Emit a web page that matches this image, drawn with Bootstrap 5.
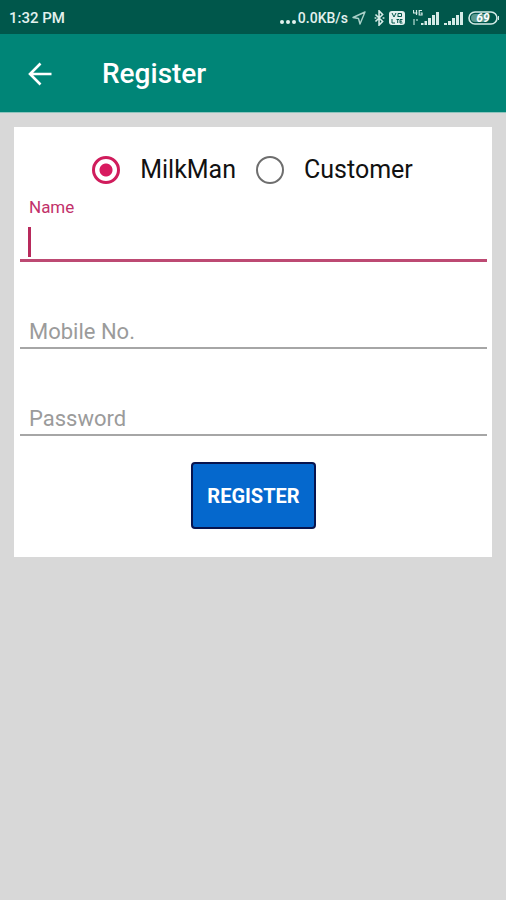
<!DOCTYPE html>
<html lang="en">
<head>
<meta charset="utf-8">
<meta name="viewport" content="width=device-width, initial-scale=1">
<title>Register</title>
<link href="https://cdn.jsdelivr.net/npm/bootstrap@5.3.0/dist/css/bootstrap.min.css" rel="stylesheet">
<style>
  body { font-family: Roboto, "Liberation Sans", sans-serif; background: #d8d8d8; color: #111; }
  .status-bar { background: #00574b; color: #e3f1ee; height: 34px; padding: 2px 7px 0 9px; font-weight: 500; }
  .clock { font-size: 15px; }
  .speed { font-size: 14px; }
  .app-bar { background: #008577; height: 79px; padding: 2px 26px 0; gap: 48px; border-bottom: 1px solid #8fc4bd; }
  .app-title { font-size: 28px; font-weight: 500; line-height: 32px; color: #fff; }
  .panel { margin: 14px; padding: 24px 5px 28px 6px; }
  .role-row { gap: 20px; padding-right: 2px; }
  .role { gap: 20px; }
  .role label { font-size: 25px; line-height: 38px; }
  .role .form-check-input { width: 28px; height: 28px; border: 2px solid #6e6e6e; background-color: #fff; box-shadow: none; }
  .role .form-check-input:checked { border: 3px solid #d01c5c; background-color: #fff; background-image: radial-gradient(circle, #d81b60 6px, transparent 7px); }
  .field label { font-size: 17px; line-height: 20px; padding-left: 9px; color: #c2316a; }
  .field input { font-size: 22px; line-height: 30px; padding: 4px 9px 0; color: #111; border: 0; border-bottom: 2px solid #a6a6a6; border-radius: 0; background: transparent; box-shadow: none; }
  .field input:focus { box-shadow: none; background: transparent; }
  .field input::placeholder { color: #9b9b9b; }
  .field .active-input { height: 45px; border-bottom: 3px solid #bd4a73; }
  .text-cursor { left: 8px; bottom: 5px; width: 3px; height: 30px; background: #b82a5c; }
  .field-next { margin-top: 51px; }
  .btn-register { margin-top: 26px; height: 67px; padding: 0 14px; font-size: 20px; font-weight: 700; color: #fff; background: #0568cd; border: 2px solid #08144e; border-radius: 4px; }
  .btn-register:hover { color: #fff; background: #075bb2; border-color: #08144e; }
</style>
</head>
<body>
<header>
  <div class="status-bar d-flex align-items-center justify-content-between">
    <span class="clock">1:32 PM</span>
    <div class="d-flex align-items-center">
      <svg width="18" height="16" viewBox="0 0 18 16" fill="#e3f1ee" aria-hidden="true"><circle cx="2" cy="12" r="2"/><circle cx="8" cy="12" r="2"/><circle cx="14" cy="12" r="2"/></svg>
      <span class="speed">0.0KB/s</span>
      <svg class="ms-1" width="14" height="14" viewBox="0 0 14 14" fill="none" stroke="#a8d0c8" stroke-width="1.4" stroke-linejoin="round" aria-hidden="true"><path d="M13 1 1 6.5 6.5 7.5 8 13Z"/></svg>
      <svg class="ms-2" width="11" height="16" viewBox="0 0 11 18" fill="none" stroke="#d5ebe7" stroke-width="1.800" aria-hidden="true"><path d="M1 5l8 8-4 4V1l4 4-8 8"/><path d="M0 9h2M9 9h2"/></svg>
      <svg class="ms-1" width="16" height="16" viewBox="0 0 16 16" aria-hidden="true"><rect y="1" width="16" height="14" rx="3" fill="#e3f1ee"/><path d="M3 3l2 4 2-4M9 7V3.500h3.500v3H9M3 9v4h3M7.500 9.500H10M8.700 9.500V13M13.500 9.500H11V13h2.500M11 11.200h2" fill="none" stroke="#00574b" stroke-width="1"/></svg>
      <svg class="ms-2" width="27" height="18" viewBox="0 0 27 18" fill="#d5ebe7" aria-hidden="true"><path d="M3.500 1v5M.5 1v3h4M9 1.500H6.200V6H9V4H7.500" fill="none" stroke="#d5ebe7" stroke-width="1.2"/><path d="M0 10h2v6H0zM3 10h2v2H3z" fill="#6ea79d"/><path d="M8 14h2.500v2H8zM11.500 12H14v4h-2.500zM15 9h3v7h-3zM19 6h3v10h-3zM23 3h3v13h-3z"/></svg>
      <svg class="ms-1" width="20" height="16" viewBox="0 0 20 16" fill="#d5ebe7" aria-hidden="true"><path d="M0 13h3v2H0zM4 11h3v4H4zM8 8h3v7H8zM12 5h3v10h-3zM16 2h3v13h-3z"/></svg>
      <svg class="ms-1" width="31" height="16" viewBox="0 0 31 16" role="img" aria-label="Battery 69"><rect x="1" y="2" width="28" height="12" rx="6" fill="none" stroke="#d5ebe7" stroke-width="1.600"/><rect x="3" y="4" width="18" height="8" rx="4" fill="#5b9a8f"/><path d="M30.500 6v4" stroke="#d5ebe7"/><text x="15" y="12" text-anchor="middle" font-size="12" font-weight="700" font-style="italic" fill="#fff">69</text></svg>
    </div>
  </div>
  <nav class="app-bar d-flex align-items-center" aria-label="Page">
    <a href="#" aria-label="Back" class="d-flex"><svg width="28" height="28" viewBox="0 0 28 28" fill="none" stroke="#fff" stroke-width="2.600" aria-hidden="true"><path d="M25.500 14H4M14.500 3.500 4 14l10.500 10.500"/></svg></a>
    <h1 class="app-title m-0">Register</h1>
  </nav>
</header>
<main>
  <form class="panel bg-white">
    <div class="role-row d-flex justify-content-center">
      <div class="role d-flex align-items-center">
        <input class="form-check-input m-0" type="radio" name="role" id="milkman" checked>
        <label for="milkman">MilkMan</label>
      </div>
      <div class="role d-flex align-items-center">
        <input class="form-check-input m-0" type="radio" name="role" id="customer">
        <label for="customer">Customer</label>
      </div>
    </div>
    <div class="field pt-2">
      <label for="name" class="d-block">Name</label>
      <div class="position-relative">
        <input class="form-control active-input" type="text" id="name">
        <span class="text-cursor position-absolute"></span>
      </div>
    </div>
    <div class="field field-next">
      <input class="form-control" type="tel" id="mobile" placeholder="Mobile No." aria-label="Mobile No.">
    </div>
    <div class="field field-next">
      <input class="form-control" type="password" id="password" placeholder="Password" aria-label="Password">
    </div>
    <div class="text-center">
      <button class="btn btn-register" type="button">REGISTER</button>
    </div>
  </form>
</main>
<script src="https://cdn.jsdelivr.net/npm/bootstrap@5.3.0/dist/js/bootstrap.bundle.min.js"></script>
</body>
</html>
